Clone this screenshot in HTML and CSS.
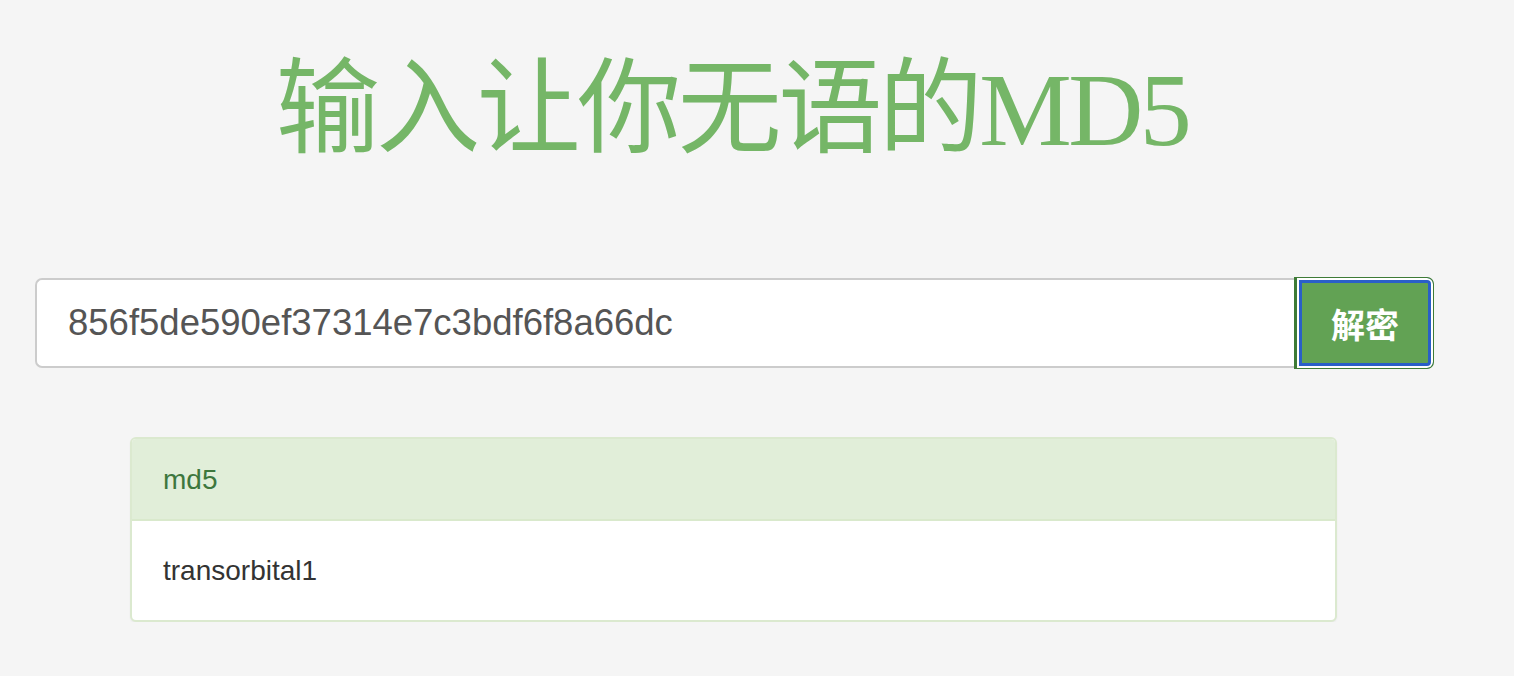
FILE: index.html
```html
<!DOCTYPE html>
<html lang="zh-CN">
<head>
<meta charset="utf-8">
<title>输入让你无语的MD5</title>
<link rel="stylesheet" href="styles.css">
</head>
<body>
<div class="page">
  <h1 class="title">输入让你无语的MD5</h1>
  <form class="search">
    <input class="search-input" type="text" value="856f5de590ef37314e7c3bdf6f8a66dc">
    <button class="search-btn" type="button">解密</button>
  </form>
  <div class="panel">
    <div class="panel-heading">md5</div>
    <div class="panel-body">transorbital1</div>
  </div>
</div>
</body>
</html>
```
FILE: styles.css
```css
html, body {
  margin: 0;
  padding: 0;
  background: #f5f5f5;
}
.page {
  width: 1514px;
  padding-top: 50px;
  font-family: "Liberation Sans", "Noto Sans CJK SC", sans-serif;
}
.title {
  margin: 0;
  text-align: center;
  font-family: "Liberation Serif", "Noto Sans CJK SC", serif;
  font-weight: normal;
  font-size: 104px;
  line-height: 120px;
  color: #75b667;
  letter-spacing: -3.5px;
  padding-right: 50px;
}
.search {
  display: flex;
  margin: 107px 0 0 35px;
  width: 1399px;
  height: 92px;
}
.search-input {
  flex: 1;
  box-sizing: border-box;
  height: 90px;
  margin-top: 1px;
  border: 2px solid #cccccc;
  border-right: none;
  border-radius: 7px 0 0 7px;
  background: #fff;
  padding: 0 0 0 31px;
  font-family: "Liberation Sans", sans-serif;
  font-size: 36.5px;
  color: #555555;
  outline: none;
}
.search-btn {
  box-sizing: border-box;
  width: 140px;
  height: 92px;
  border: 1px solid #3e7b36;
  border-left-width: 3px;
  border-radius: 0 7px 7px 0;
  background: #62a254;
  box-shadow: inset 0 0 0 2px #ffffff, inset 0 0 0 5px #2a5fc8;
  color: #fff;
  font-family: "Noto Sans CJK SC", sans-serif;
  font-weight: bold;
  font-size: 34px;
  padding: 0;
}
.panel {
  margin: 68px 0 0 130px;
  width: 1207px;
  box-sizing: border-box;
  border: 2px solid #dbe9cf;
  border-radius: 6px;
  background: #fff;
  box-shadow: 0 1px 2px rgba(0,0,0,0.05);
  overflow: hidden;
}
.panel-heading {
  height: 82px;
  box-sizing: border-box;
  background: #e1eed9;
  border-bottom: 2px solid #d9e9cc;
  padding: 0 0 0 31px;
  line-height: 82px;
  font-size: 28px;
  color: #3d773e;
}
.panel-body {
  height: 99px;
  box-sizing: border-box;
  padding: 0 0 0 31px;
  line-height: 100px;
  font-size: 28px;
  color: #333333;
}
```
